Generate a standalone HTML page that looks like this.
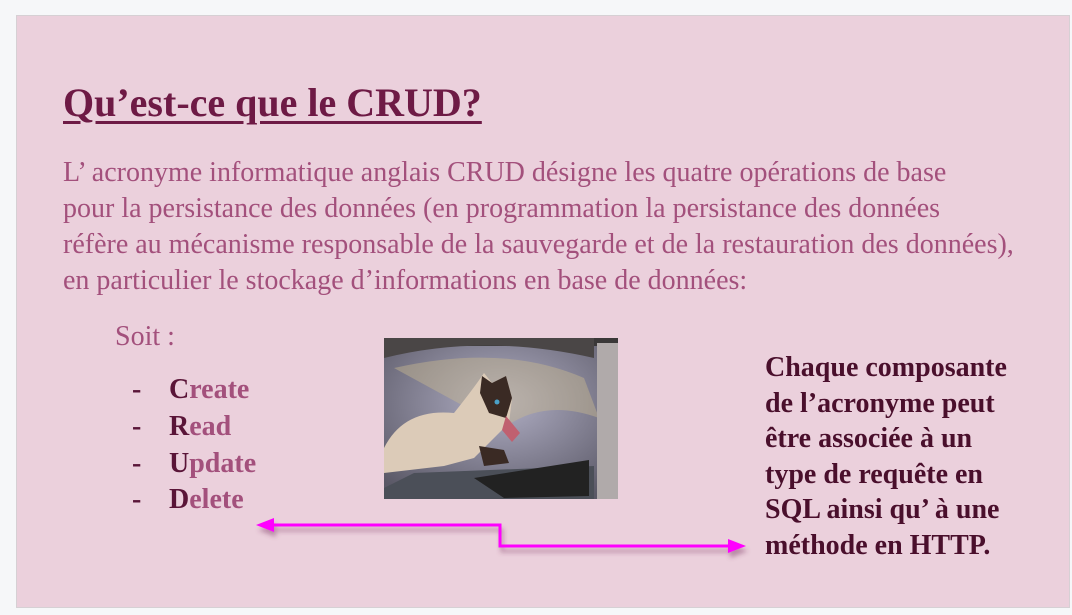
<!DOCTYPE html>
<html><head><meta charset="utf-8"><style>
body{margin:0;width:1072px;height:615px;background:#f6f7f9;position:relative;overflow:hidden;font-family:"Liberation Serif",serif}
.slide{position:absolute;left:16px;top:15px;width:1052px;height:591px;background:#ebd0dc;border:1px solid #d6d0d4}
.t{position:absolute;white-space:nowrap}
h1{position:absolute;left:63px;top:80px;margin:0;font-size:40px;line-height:46px;color:#6e1a45;text-decoration:underline;text-decoration-thickness:3px;text-underline-offset:5px;font-weight:bold}
.p{left:63px;top:155px;font-size:28px;line-height:36px;color:#a3507c}
.soit{left:115px;top:320px;font-size:28px;line-height:34px;color:#a3507c}
.li{left:132px;font-size:28px;line-height:32px;font-weight:bold;color:#a3507c}
.li b{color:#5a1538}
.li span.d{display:inline-block;width:37px;color:#5a1538}
.r{left:765px;top:350px;font-size:28px;line-height:35.5px;font-weight:bold;color:#4a0f2c}
</style></head><body>
<div class="slide"></div>
<h1>Qu’est-ce que le CRUD?</h1>
<div class="t p">L’ acronyme informatique anglais CRUD désigne les quatre opérations de base<br>pour la persistance des données (en programmation la persistance des données<br>réfère au mécanisme responsable de la sauvegarde et de la restauration des données),<br>en particulier le stockage d’informations en base de données:</div>
<div class="t soit">Soit :</div>
<div class="t li" style="top:374px"><span class="d">-</span><b>C</b>reate</div>
<div class="t li" style="top:411px"><span class="d">-</span><b>R</b>ead</div>
<div class="t li" style="top:448px"><span class="d">-</span><b>U</b>pdate</div>
<div class="t li" style="top:484px"><span class="d">-</span><b>D</b>elete</div>
<svg style="position:absolute;left:384px;top:338px" width="234" height="161">
<defs><radialGradient id="g" cx="0.5" cy="0.4" r="0.7"><stop offset="0" stop-color="#b0aec4"/><stop offset="1" stop-color="#5a5866"/></radialGradient></defs>
<rect width="234" height="161" fill="url(#g)"/>
<rect x="0" y="0" width="234" height="8" fill="#3a3838"/>
<path d="M0 20 Q100 -5 210 20 L210 0 L0 0Z" fill="#4a4646"/>
<path d="M10 30 Q120 5 200 40 L215 80 Q160 60 120 90 Z" fill="#c8b890" opacity=".45"/>
<rect x="213" y="5" width="21" height="156" fill="#b0aaaa"/>
<path d="M0 150 L30 135 L210 128 L210 161 L0 161Z" fill="#4b4f58"/>
<path d="M90 140 L205 122 L205 158 L120 160Z" fill="#222"/>
<path d="M0 110 Q20 70 70 75 Q90 50 100 35 L108 45 L122 38 L128 60 L125 85 L105 105 L90 120 L60 128 L0 135Z" fill="#dccbb8"/>
<path d="M98 38 L108 45 L122 38 L128 60 L122 80 L105 75 L96 55Z" fill="#3a2a24"/>
<path d="M122 78 L136 95 L128 104 L118 92Z" fill="#c06070"/>
<circle cx="113" cy="64" r="2.5" fill="#4aa0c8"/>
<path d="M95 108 L120 112 L125 125 L100 128Z" fill="#3a2a24"/>
</svg>
<svg style="position:absolute;left:0;top:0" width="1072" height="615">
<defs><filter id="s" x="-10%" y="-50%" width="120%" height="300%"><feDropShadow dx="2" dy="5" stdDeviation="2.5" flood-color="#7a3060" flood-opacity=".45"/></filter></defs>
<g filter="url(#s)">
<polyline points="270,525 500,525 500,546 730,546" fill="none" stroke="#ff00ff" stroke-width="3"/>
<polygon points="256,525 274,518 274,532" fill="#ff00ff"/>
<polygon points="746,546 728,539 728,553" fill="#ff00ff"/>
</g>
</svg>
<div class="t r">Chaque composante<br>de l’acronyme peut<br>être associée à un<br>type de requête en<br>SQL ainsi qu’ à une<br>méthode en HTTP.</div>
</body></html>
